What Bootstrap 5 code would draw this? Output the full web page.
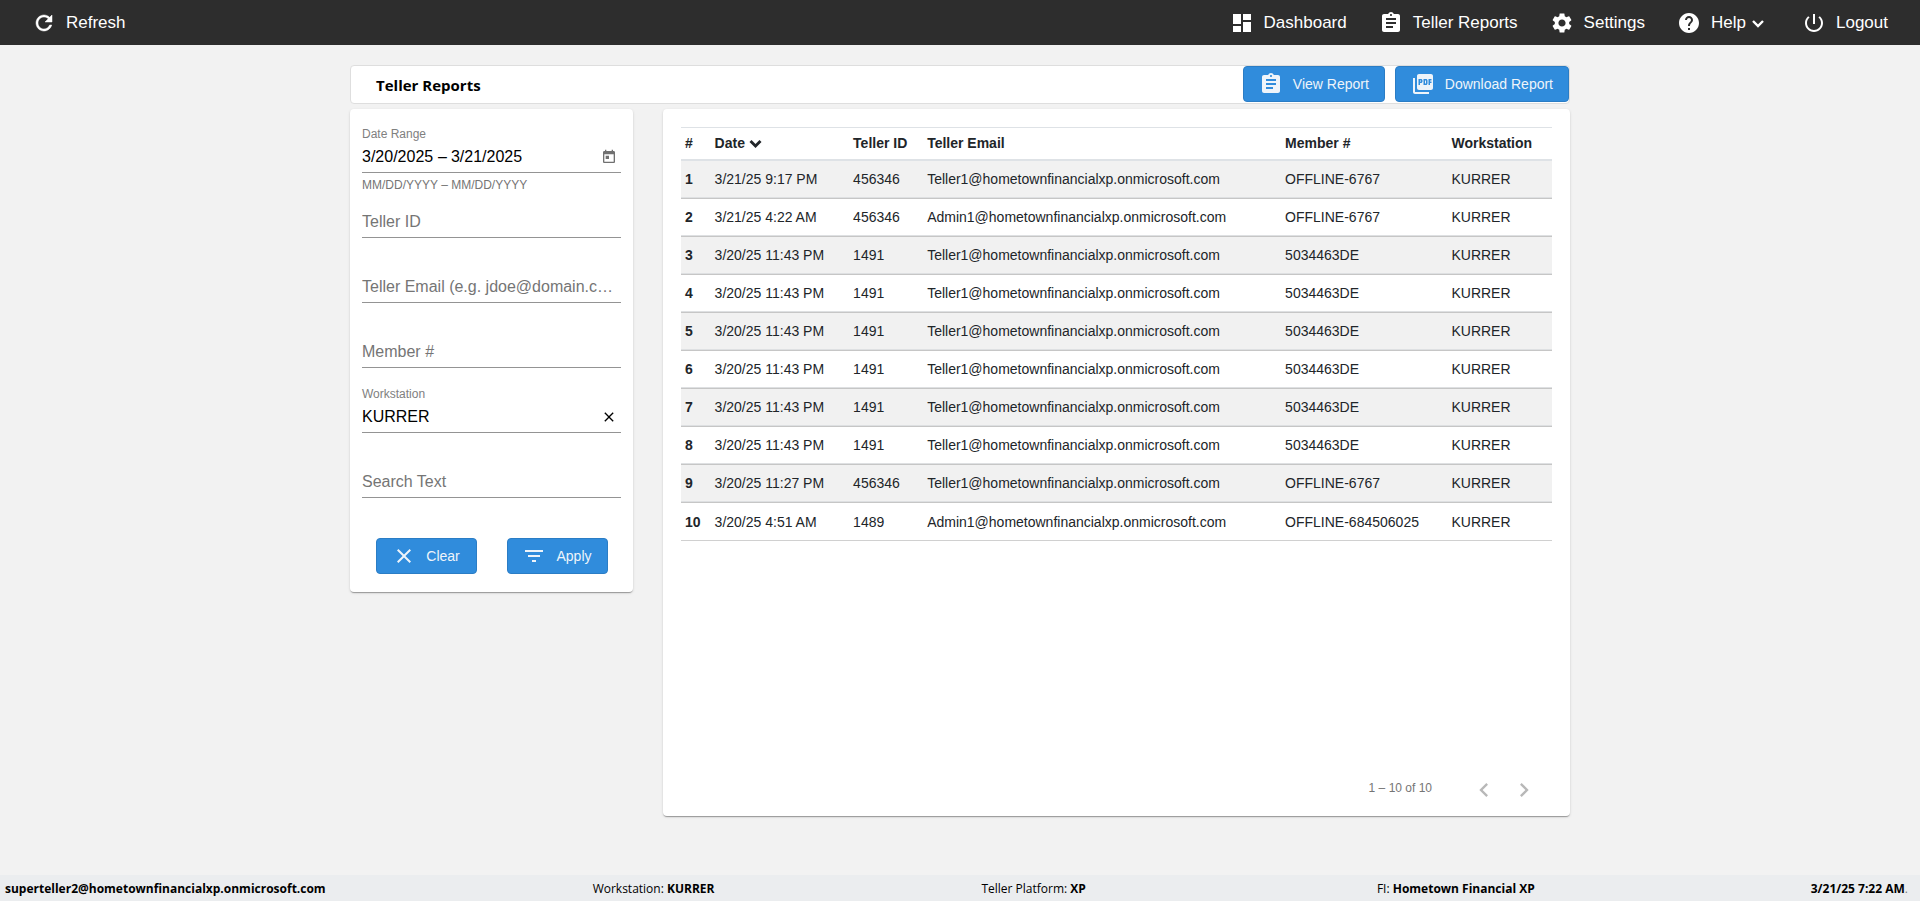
<!DOCTYPE html>
<html lang="en">
<head>
<meta charset="utf-8">
<meta name="viewport" content="width=device-width, initial-scale=1">
<title>Teller Reports</title>
<link href="https://cdn.jsdelivr.net/npm/bootstrap@5.3.0/dist/css/bootstrap.min.css" rel="stylesheet">
<style>
  body { background: #f2f2f2; font-family: "Liberation Sans", Arial, sans-serif; font-size: 14px; color: #212529; }
  svg { fill: currentColor; flex: none; }
  .topbar { background: #2d2d2d; min-height: 45px; font-size: 17px; line-height: 24px; }
  .topbar a { color: #fff; text-decoration: none; padding: 7px 16px 6px; gap: 10px; }
  .page-wrap { max-width: 1220px; margin-bottom: 59px; padding-top: 20px; }
  .title-bar { background: #fff; border: 1px solid #dedede; border-radius: 4px; height: 39px; padding-left: 25px; gap: 10px; }
  .ui-font { font-family: "Open Sans", "Noto Sans", sans-serif; color: #000; }
  .title-bar h1 { font-size: 15px; line-height: 20px; font-weight: 700; }
  .btn-act { --bs-btn-color: #eef4fa; --bs-btn-bg: #308cdc; --bs-btn-border-color: #2b7dc5; --bs-btn-hover-color: #fff; --bs-btn-hover-bg: #2a7fc9; --bs-btn-hover-border-color: #2571b4;
    --bs-btn-border-radius: 4px; --bs-btn-font-size: 14px; --bs-btn-padding-y: 0; --bs-btn-padding-x: 15px; height: 36px; gap: 10px; }
  .panels { margin-top: 5px; gap: 30px; }
  .panel { background: #fff; border-radius: 4px; box-shadow: 0 2px 1px -1px rgba(0,0,0,.2), 0 1px 1px rgba(0,0,0,.14), 0 1px 3px rgba(0,0,0,.12); }
  .filters { width: 283px; padding: 18px 12px; }
  .field-label { height: 14px; font-size: 12px; line-height: 14px; color: #808080; }
  .field-empty { padding-top: 14px; }
  .field-line { height: 32px; border-bottom: 1px solid #949494; }
  .field-line input { border: 0; padding: 0; outline: 0; background: none; font-size: 16px; color: #000; min-width: 0; height: 30px; }
  .field-line .date-input { width: 72px; flex: none; }
  .float-label { position: absolute; inset: 0 4px 0 0; font-size: 16px; line-height: 31px; color: #757575; pointer-events: none; }
  .field-line input:focus + .float-label, .field-line input:not(:placeholder-shown) + .float-label { display: none; }
  .field-hint { height: 19px; padding-top: 5px; font-size: 12px; line-height: 14px; color: #757575; }
  .icon-btn { border: 0; background: none; padding: 0; color: inherit; display: flex; flex: none; align-items: center; justify-content: center; width: 24px; height: 24px; }
  .calendar-btn { color: #707070; }
  .filter-actions { margin-top: 21px; gap: 30px; }
  .filter-actions .btn { width: 101px; }
  .results { flex: 1; padding: 18px 18px 6px; }
  .grid-table { table-layout: fixed; border-collapse: separate; border-spacing: 0; width: 100%; line-height: 20px; }
  .grid-table th, .grid-table td { padding: 0 4px 2px; white-space: nowrap; }
  .grid-table thead th { height: 34px; border-top: 1px solid #dee2e6; border-bottom: 2px solid #dee2e6; }
  .grid-table tbody > tr > * { height: 38px; border-bottom: 1px solid #c6c6c6; box-shadow: inset 0 -1px #dee0e2; }
  .grid-table tbody > tr:last-child > * { box-shadow: none; border-bottom-color: #d0d0d0; padding-bottom: 0; }
  .grid-table tbody > tr:nth-child(odd) > * { background: #f1f1f1; }
  .pager { font-size: 12px; color: #757575; padding-right: 8px; }
  .pager-range { margin-right: 32px; padding-bottom: 4px; }
  .pager .icon-btn { width: 40px; height: 40px; color: #b8b8b8; }
  .statusbar { background: #ebedef; min-height: 26px; font-size: 12px; line-height: 18px; padding: 5px 12px 3px 5px; }
  .institution { padding-left: 24px; }
  .clock { padding-left: 9px; }
</style>
</head>
<body class="d-flex flex-column min-vh-100">

<nav class="topbar d-flex justify-content-between px-3">
  <a href="#" class="d-flex align-items-center"><svg width="24" height="24" viewBox="0 0 24 24"><path d="M17.65 6.35C16.2 4.9 14.21 4 12 4c-4.42 0-7.99 3.58-7.99 8s3.57 8 7.99 8c3.73 0 6.84-2.55 7.73-6h-2.08c-.82 2.33-3.04 4-5.65 4-3.31 0-6-2.69-6-6s2.69-6 6-6c1.66 0 3.14.69 4.22 1.78L13 11h7V4l-2.35 2.35z" stroke="currentColor" stroke-width=".5"/></svg>Refresh</a>
  <div class="d-flex">
    <a href="#" class="d-flex align-items-center"><svg width="24" height="24" viewBox="0 0 24 24"><path d="M3 13h8V3H3v10zm0 8h8v-6H3v6zm10 0h8V11h-8v10zm0-18v6h8V3h-8z"/></svg>Dashboard</a>
    <a href="#" class="d-flex align-items-center"><svg width="24" height="24" viewBox="0 0 24 24"><path d="M19 3h-4.18C14.4 1.84 13.3 1 12 1c-1.3 0-2.4.84-2.82 2H5c-1.1 0-2 .9-2 2v14c0 1.1.9 2 2 2h14c1.1 0 2-.9 2-2V5c0-1.1-.9-2-2-2zm-7 0c.55 0 1 .45 1 1s-.45 1-1 1-1-.45-1-1 .45-1 1-1zm2 14H7v-2h7v2zm3-4H7v-2h10v2zm0-4H7V7h10v2z"/></svg>Teller Reports</a>
    <a href="#" class="d-flex align-items-center"><svg width="24" height="24" viewBox="0 0 24 24"><path d="M19.14 12.94c.04-.3.06-.61.06-.94 0-.32-.02-.64-.07-.94l2.03-1.58c.18-.14.23-.41.12-.61l-1.92-3.32c-.12-.22-.37-.29-.59-.22l-2.39.96c-.5-.38-1.03-.7-1.62-.94l-.36-2.54c-.04-.24-.24-.41-.48-.41h-3.84c-.24 0-.43.17-.47.41l-.36 2.54c-.59.24-1.13.57-1.62.94l-2.39-.96c-.22-.08-.47 0-.59.22L2.74 8.87c-.12.21-.08.47.12.61l2.03 1.58c-.05.3-.09.63-.09.94s.02.64.07.94l-2.03 1.58c-.18.14-.23.41-.12.61l1.92 3.32c.12.22.37.29.59.22l2.39-.96c.5.38 1.03.7 1.62.94l.36 2.54c.05.24.24.41.48.41h3.84c.24 0 .44-.17.47-.41l.36-2.54c.59-.24 1.13-.56 1.62-.94l2.39.96c.22.08.47 0 .59-.22l1.92-3.32c.12-.22.07-.47-.12-.61l-2.01-1.58zM12 15.6c-1.98 0-3.6-1.62-3.6-3.6s1.62-3.6 3.6-3.6 3.6 1.62 3.6 3.6-1.62 3.6-3.6 3.6z"/></svg>Settings</a>
    <a href="#" class="d-flex align-items-center"><svg width="24" height="24" viewBox="0 0 24 24"><path d="M12 2C6.48 2 2 6.48 2 12s4.48 10 10 10 10-4.48 10-10S17.52 2 12 2zm1 17h-2v-2h2v2zm2.07-7.75l-.9.92C13.45 12.9 13 13.5 13 15h-2v-.5c0-1.1.45-2.1 1.17-2.83l1.24-1.26c.37-.36.59-.86.59-1.41 0-1.1-.9-2-2-2s-2 .9-2 2H8c0-2.21 1.79-4 4-4s4 1.79 4 4c0 .88-.36 1.68-.93 2.25z"/></svg><span class="d-flex align-items-center gap-1">Help<svg width="16" height="16" viewBox="0 0 16 16"><path d="M3 6l5 5 5-5" fill="none" stroke="currentColor" stroke-width="2.4"/></svg></span></a>
    <a href="#" class="d-flex align-items-center ms-1"><svg width="24" height="24" viewBox="0 0 24 24"><path d="M13 3h-2v10h2V3zm4.83 2.17l-1.42 1.42C17.99 7.86 19 9.81 19 12c0 3.87-3.13 7-7 7s-7-3.13-7-7c0-2.19 1.01-4.14 2.58-5.42L6.17 5.17C4.23 6.82 3 9.26 3 12c0 4.97 4.03 9 9 9s9-4.03 9-9c0-2.74-1.23-5.18-3.17-6.83z"/></svg>Logout</a>
  </div>
</nav>

<main class="page-wrap w-100 mx-auto flex-grow-1 d-flex flex-column">
  <header class="title-bar d-flex align-items-start">
    <h1 class="ui-font me-auto mb-0 align-self-center">Teller Reports</h1>
    <button type="button" class="btn btn-act d-flex align-items-center"><svg width="24" height="24" viewBox="0 0 24 24"><path d="M19 3h-4.18C14.4 1.84 13.3 1 12 1c-1.3 0-2.4.84-2.82 2H5c-1.1 0-2 .9-2 2v14c0 1.1.9 2 2 2h14c1.1 0 2-.9 2-2V5c0-1.1-.9-2-2-2zm-7 0c.55 0 1 .45 1 1s-.45 1-1 1-1-.45-1-1 .45-1 1-1zm2 14H7v-2h7v2zm3-4H7v-2h10v2zm0-4H7V7h10v2z"/></svg>View Report</button>
    <button type="button" class="btn btn-act d-flex align-items-center"><svg width="24" height="24" viewBox="0 0 24 24"><path d="M20 2H8c-1.1 0-2 .9-2 2v12c0 1.1.9 2 2 2h12c1.1 0 2-.9 2-2V4c0-1.1-.9-2-2-2zm-8.5 7.5c0 .83-.67 1.5-1.5 1.5H9v2H7.5V7H10c.83 0 1.500.67 1.500 1.500v1zm5 2c0 .83-.67 1.500-1.500 1.500h-2.500V7H15c.83 0 1.500.67 1.500 1.500v3zm4-3H19v1h1.500V11H19v2h-1.500V7h3v1.500zM9 9.500h1v-1H9v1zM4 6H2v14c0 1.100.9 2 2 2h14v-2H4V6zm10 5.500h1v-3h-1v3z"/></svg>Download Report</button>
  </header>

  <div class="panels d-flex flex-grow-1">
    <form class="panel filters align-self-start">
      <div>
        <label class="field-label d-block" for="dateFrom">Date Range</label>
        <div class="field-line d-flex align-items-center">
          <input id="dateFrom" class="date-input" type="text" value="3/20/2025">
          <label class="fs-6 text-black px-1" for="dateTo">–</label>
          <input id="dateTo" class="flex-grow-1" type="text" value="3/21/2025">
          <button type="button" class="icon-btn calendar-btn" aria-label="Open calendar"><svg width="16" height="16" viewBox="0 0 24 24"><path d="M19 3h-1V1h-2v2H8V1H6v2H5c-1.11 0-1.99.9-1.99 2L3 19c0 1.100.89 2 2 2h14c1.100 0 2-.9 2-2V5c0-1.100-.9-2-2-2zm0 16H5V8h14v11zM7 10h5v5H7z"/></svg></button>
        </div>
        <div class="field-hint">MM/DD/YYYY – MM/DD/YYYY</div>
      </div>
      <div class="field-empty">
        <div class="field-line position-relative"><input id="tellerId" class="w-100" type="text" placeholder=" "><label class="float-label text-truncate" for="tellerId">Teller ID</label></div>
        <div class="field-hint"></div>
      </div>
      <div class="field-empty">
        <div class="field-line position-relative"><input id="tellerEmail" class="w-100" type="text" placeholder=" "><label class="float-label text-truncate" for="tellerEmail">Teller Email (e.g. jdoe@domain.com)</label></div>
        <div class="field-hint"></div>
      </div>
      <div class="field-empty">
        <div class="field-line position-relative"><input id="memberNo" class="w-100" type="text" placeholder=" "><label class="float-label text-truncate" for="memberNo">Member #</label></div>
        <div class="field-hint"></div>
      </div>
      <div>
        <label class="field-label d-block" for="station">Workstation</label>
        <div class="field-line d-flex align-items-center">
          <input id="station" class="flex-grow-1" type="text" value="KURRER">
          <button type="button" class="icon-btn text-black" aria-label="Clear workstation"><svg width="16" height="16" viewBox="0 0 24 24"><path d="M19 6.41L17.59 5 12 10.59 6.41 5 5 6.41 10.59 12 5 17.59 6.41 19 12 13.41 17.59 19 19 17.59 13.41 12z"/></svg></button>
        </div>
        <div class="field-hint"></div>
      </div>
      <div class="field-empty">
        <div class="field-line position-relative"><input id="searchText" class="w-100" type="text" placeholder=" "><label class="float-label text-truncate" for="searchText">Search Text</label></div>
        <div class="field-hint"></div>
      </div>
      <div class="filter-actions d-flex justify-content-center">
        <button type="reset" class="btn btn-act d-flex align-items-center justify-content-center"><svg width="24" height="24" viewBox="0 0 24 24"><path d="M19 6.41L17.59 5 12 10.59 6.41 5 5 6.41 10.59 12 5 17.59 6.41 19 12 13.41 17.59 19 19 17.59 13.41 12z"/></svg>Clear</button>
        <button type="button" class="btn btn-act d-flex align-items-center justify-content-center"><svg width="24" height="24" viewBox="0 0 24 24"><path d="M10 18h4v-2h-4v2zM3 6v2h18V6H3zm3 7h12v-2H6v2z"/></svg>Apply</button>
      </div>
    </form>

    <section class="panel results d-flex flex-column justify-content-between">
      <table class="grid-table">
        <colgroup><col style="width:3.4%"><col style="width:15.9%"><col style="width:8.5%"><col style="width:41.1%"><col style="width:19.1%"><col style="width:12%"></colgroup>
        <thead><tr><th>#</th><th>Date <svg width="13" height="8" viewBox="0 0 12 8"><path d="M0 2l2-2 4 4 4-4 2 2-6 6z"/></svg></th><th>Teller ID</th><th>Teller Email</th><th>Member #</th><th>Workstation</th></tr></thead>
        <tbody>
          <tr><th>1</th><td>3/21/25 9:17 PM</td><td>456346</td><td>Teller1@hometownfinancialxp.onmicrosoft.com</td><td>OFFLINE-6767</td><td>KURRER</td></tr>
          <tr><th>2</th><td>3/21/25 4:22 AM</td><td>456346</td><td>Admin1@hometownfinancialxp.onmicrosoft.com</td><td>OFFLINE-6767</td><td>KURRER</td></tr>
          <tr><th>3</th><td>3/20/25 11:43 PM</td><td>1491</td><td>Teller1@hometownfinancialxp.onmicrosoft.com</td><td>5034463DE</td><td>KURRER</td></tr>
          <tr><th>4</th><td>3/20/25 11:43 PM</td><td>1491</td><td>Teller1@hometownfinancialxp.onmicrosoft.com</td><td>5034463DE</td><td>KURRER</td></tr>
          <tr><th>5</th><td>3/20/25 11:43 PM</td><td>1491</td><td>Teller1@hometownfinancialxp.onmicrosoft.com</td><td>5034463DE</td><td>KURRER</td></tr>
          <tr><th>6</th><td>3/20/25 11:43 PM</td><td>1491</td><td>Teller1@hometownfinancialxp.onmicrosoft.com</td><td>5034463DE</td><td>KURRER</td></tr>
          <tr><th>7</th><td>3/20/25 11:43 PM</td><td>1491</td><td>Teller1@hometownfinancialxp.onmicrosoft.com</td><td>5034463DE</td><td>KURRER</td></tr>
          <tr><th>8</th><td>3/20/25 11:43 PM</td><td>1491</td><td>Teller1@hometownfinancialxp.onmicrosoft.com</td><td>5034463DE</td><td>KURRER</td></tr>
          <tr><th>9</th><td>3/20/25 11:27 PM</td><td>456346</td><td>Teller1@hometownfinancialxp.onmicrosoft.com</td><td>OFFLINE-6767</td><td>KURRER</td></tr>
          <tr><th>10</th><td>3/20/25 4:51 AM</td><td>1489</td><td>Admin1@hometownfinancialxp.onmicrosoft.com</td><td>OFFLINE-684506025</td><td>KURRER</td></tr>
        </tbody>
      </table>
      <div class="pager d-flex justify-content-end align-items-center">
        <span class="pager-range">1 – 10 of 10</span>
        <button type="button" class="icon-btn" aria-label="Previous page"><svg width="28" height="28" viewBox="0 0 24 24"><path d="M15.41 7.41L14 6l-6 6 6 6 1.41-1.41L10.83 12z"/></svg></button>
        <button type="button" class="icon-btn" aria-label="Next page"><svg width="28" height="28" viewBox="0 0 24 24"><path d="M10 6L8.59 7.41 13.17 12l-4.58 4.59L10 18l6-6z"/></svg></button>
      </div>
    </section>
  </div>
</main>

<footer class="statusbar ui-font d-flex justify-content-between">
  <b>superteller2@hometownfinancialxp.onmicrosoft.com</b>
  <span>Workstation: <b>KURRER</b></span>
  <span>Teller Platform: <b>XP</b></span>
  <span class="institution">FI: <b>Hometown Financial XP</b></span>
  <span class="clock"><b>3/21/25 7:22 AM</b><span class="text-black-50">.</span></span>
</footer>
<script src="https://cdn.jsdelivr.net/npm/bootstrap@5.3.0/dist/js/bootstrap.bundle.min.js"></script>
</body>
</html>
